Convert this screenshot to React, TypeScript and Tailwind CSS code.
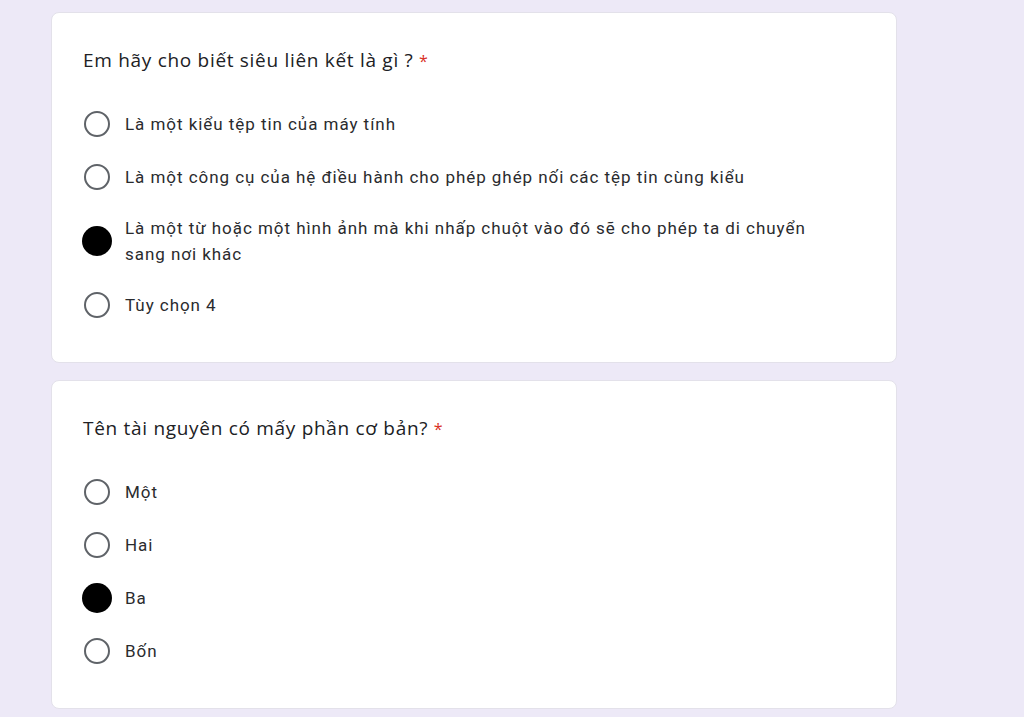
import { ReactNode } from "react";

type Cau = {
  cauHoi: string
  luaChon: string[]
  daChon: number
}

const cacCau: Cau[] = [
  {
    cauHoi: "Em hãy cho biết siêu liên kết là gì ?",
    luaChon: [
      "Là một kiểu tệp tin của máy tính",
      "Là một công cụ của hệ điều hành cho phép ghép nối các tệp tin cùng kiểu",
      "Là một từ hoặc một hình ảnh mà khi nhấp chuột vào đó sẽ cho phép ta di chuyển sang nơi khác",
      "Tùy chọn 4",
    ],
    daChon: 2,
  },
  {
    cauHoi: "Tên tài nguyên có mấy phần cơ bản?",
    luaChon: ["Một", "Hai", "Ba", "Bốn"],
    daChon: 2,
  },
]

function NutChon({ chon }: { chon: boolean }) {
  return (
    <div className="w-[30px] h-[30px] flex items-center justify-center shrink-0">
      {chon ? (
        <div className="w-[30px] h-[30px] rounded-full bg-black"></div>
      ) : (
        <div className="w-[26px] h-[26px] rounded-full border-2 border-[#5f6368]"></div>
      )}
    </div>
  )
}

function LuaChon({ chon, children }: { chon: boolean; children: ReactNode }) {
  return (
    <div className="flex items-center gap-[13px]">
      <NutChon chon={chon} />
      <span className="text-[17px] leading-[26px] tracking-[0.95px] text-[#2a2b2e] max-w-[705px]">{children}</span>
    </div>
  )
}

export default function App() {
  return (
    <main className="w-full min-h-[717px] bg-[#ede9f7] pt-3 pl-[51px]" style={{ fontFamily: "Roboto, 'Noto Sans', sans-serif" }}>
      <div className="w-[846px] flex flex-col gap-[17px]">
        {cacCau.map((cau, i) => (
          <section key={i} className="bg-white border border-[#e3e1ea] rounded-[8px] pt-[35px] pb-[42px] px-[30px]">
            <h2 className="text-[19px] leading-[24px] tracking-[0.7px] text-[#202124] pl-[1px]" style={{ fontFamily: "'Open Sans', sans-serif" }}>
              {cau.cauHoi} <span className="text-[#d93025] text-[16px]">*</span>
            </h2>
            <div className="mt-[36px] flex flex-col gap-[23px]">
              {cau.luaChon.map((lc, j) => (
                <LuaChon key={j} chon={j === cau.daChon}>{lc}</LuaChon>
              ))}
            </div>
          </section>
        ))}
      </div>
    </main>
  )
}
